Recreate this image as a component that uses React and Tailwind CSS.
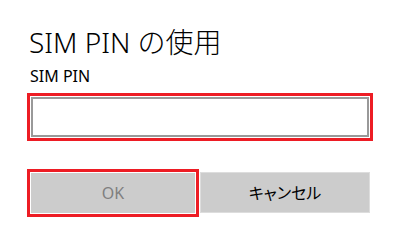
import React from 'react';

const FONT = "font-['Noto_Sans','Noto_Sans_CJK_JP',sans-serif]";

export default function App() {
  return (
    <div className={`w-[400px] h-[243px] bg-white text-black pl-[27px] ${FONT}`}>
      {/* Title */}
      <h1 className="pt-[28px] pl-[2px] text-[28px] leading-[28px] font-light">
        SIM PIN の使用
      </h1>
      <div className="mt-[12px] pl-[3px] text-[16px] leading-[16px]">SIM PIN</div>

      {/* PIN input with focus annotation */}
      <div className="mt-[9px] w-[346px] h-[48px] border-[3px] border-[#ed1c24] p-[1px]">
        <input
          type="password"
          className="w-full h-full border-2 border-[#999999] bg-white outline-none px-2 text-[16px]"
        />
      </div>

      {/* Buttons */}
      <div className="mt-[28px] flex items-start">
        <div className="w-[172px] h-[48px] border-[3px] border-[#ed1c24] p-[1px]">
          <button
            disabled
            className="w-full h-full bg-[#cccccc] text-[#7f7f7f] text-[16px] leading-none"
          >
            OK
          </button>
        </div>
        <button className="ml-[1px] mt-[3px] w-[170px] h-[41px] bg-[#cccccc] border border-[#dddddd] text-[16px] leading-none text-black [font-feature-settings:'palt']">
          キャンセル
        </button>
      </div>
    </div>
  );
}
